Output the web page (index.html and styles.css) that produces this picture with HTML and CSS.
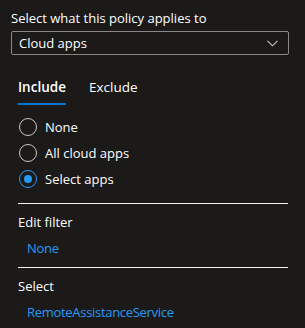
FILE: index.html
```html
<!DOCTYPE html>
<html lang="en">
<head>
    <meta charset="UTF-8">
    <title>Cloud apps</title>
    <link rel="stylesheet" href="styles.css">
</head>
<body>
    <div class="panel">
        <label class="field-label" for="applies-to">Select what this policy applies to</label>
        <div class="dropdown" id="applies-to">
            <span>Cloud apps</span>
            <svg class="chevron" width="11" height="7" viewBox="0 0 11 7">
                <path d="M0.5 0.8 L5.5 5.8 L10.5 0.8" fill="none" stroke="#c8c6c4" stroke-width="1.1"/>
            </svg>
        </div>

        <div class="section">
            <!-- Tabs -->
            <div class="tabs">
                <span class="tab active">Include</span>
                <span class="tab">Exclude</span>
            </div>

            <div class="radios">
                <div class="radio"><span class="circle"></span>None</div>
                <div class="radio"><span class="circle"></span>All cloud apps</div>
                <div class="radio checked"><span class="circle"></span>Select apps</div>
            </div>

            <div class="group">
                <div class="group-title">Edit filter</div>
                <a class="link" href="#">None</a>
            </div>

            <div class="group">
                <div class="group-title">Select</div>
                <a class="link" href="#">RemoteAssistanceService</a>
            </div>
        </div>
    </div>
</body>
</html>
```

FILE: styles.css
```css
body {
    margin: 0;
    background-color: #1b1a19;
    color: #ffffff;
    font-family: "Open Sans", "Noto Sans", sans-serif;
    font-size: 13px;
}

.panel {
    padding: 8px 16px 0 11px;
}

.field-label {
    display: block;
    line-height: 20px;
    margin-bottom: 3px;
}

.dropdown {
    height: 22px;
    border: 1px solid #8a8886;
    border-radius: 2px;
    display: flex;
    align-items: center;
    justify-content: space-between;
    padding: 0 10px 0 7px;
}

.section {
    padding-left: 7px;
    padding-right: 1px;
}

.tabs {
    display: flex;
    gap: 23px;
    margin-top: 22px;
}

.tab {
    font-size: 13.5px;
    line-height: 20px;
    padding-bottom: 6px;
    border-bottom: 2px solid transparent;
}

.tab.active {
    font-weight: 600;
    border-bottom-color: #0078d4;
}

.radios {
    padding-top: 9px;
    padding-bottom: 11px;
}

.radio {
    display: flex;
    align-items: center;
    gap: 8px;
    height: 26px;
}

.circle {
    width: 16px;
    height: 16px;
    border: 1px solid #c8c6c4;
    border-radius: 50%;
    margin-left: 1px;
    position: relative;
}

.radio.checked .circle {
    border-color: #2899f5;
}

.radio.checked .circle::after {
    content: "";
    position: absolute;
    top: 4px;
    left: 4px;
    width: 8px;
    height: 8px;
    border-radius: 50%;
    background-color: #2899f5;
}

.group {
    border-top: 1px solid #f3f2f1;
    padding-top: 8px;
    padding-bottom: 9px;
}

.group-title {
    line-height: 20px;
    margin-bottom: 6px;
}

.link {
    display: block;
    color: #2899f5;
    text-decoration: none;
    padding-left: 9px;
    line-height: 20px;
    letter-spacing: -0.3px;
}
```
